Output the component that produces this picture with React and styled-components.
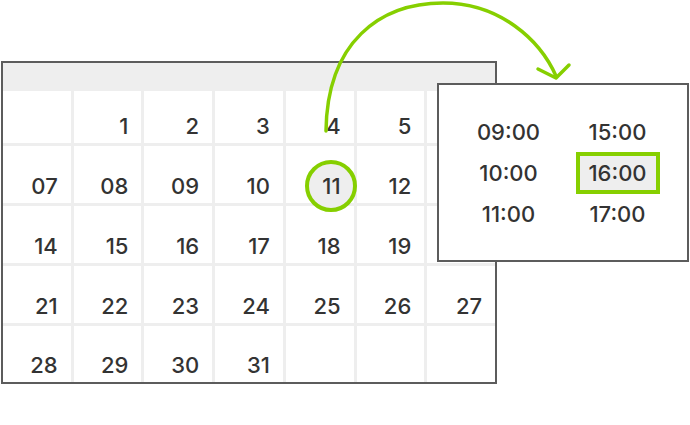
import React from "react";
import styled, { createGlobalStyle, css } from "styled-components";

const GREEN = "#86cf00";

const GlobalStyle = createGlobalStyle`
  body {
    margin: 0;
    background: #ffffff;
    font-family: Inter, "DejaVu Sans", sans-serif;
  }
`;

const Stage = styled.div`
  position: relative;
  width: 690px;
  height: 425px;
  overflow: hidden;
  padding: 61px 0 0 1px;
  box-sizing: border-box;
`;

const Calendar = styled.div`
  width: 496px;
  border: 2px solid #5c5c5c;
  box-sizing: border-box;
  background: #eeeeee;
`;

const CalendarHeader = styled.div`
  height: 28px;
  background: #eeeeee;
`;

const DayGrid = styled.div`
  display: grid;
  grid-template-columns: repeat(7, 1fr);
  grid-template-rows: 52px 57px 57px 57px 56px;
  gap: 3px;
  background: #eeeeee;
`;

const DayCell = styled.div`
  display: flex;
  align-items: flex-end;
  justify-content: flex-end;
  padding: 0 13px 6px 0;
  background: #ffffff;
`;

const DayNumber = styled.span`
  position: relative;
  z-index: 0;
  font-size: 22px;
  font-weight: 500;
  line-height: 22px;
  color: #333333;

  ${({ selected }) =>
    selected &&
    css`
      &::before {
        content: "";
        position: absolute;
        left: 50%;
        top: 50%;
        width: 52px;
        height: 52px;
        transform: translate(-50%, -50%);
        border: 4px solid ${GREEN};
        border-radius: 50%;
        background: #eeeeee;
        box-sizing: border-box;
        z-index: -1;
      }
    `}
`;

const TimePanel = styled.div`
  position: absolute;
  left: 437px;
  top: 83px;
  width: 252px;
  height: 179px;
  border: 2px solid #5c5c5c;
  box-sizing: border-box;
  background: #ffffff;
  display: grid;
  grid-template-columns: 84px 84px;
  grid-template-rows: repeat(3, 41px);
  grid-auto-flow: column;
  column-gap: 25px;
  justify-content: center;
  align-content: center;
`;

const TimeSlot = styled.div`
  display: flex;
  align-items: center;
  justify-content: center;
`;

const TimeLabel = styled.span`
  font-size: 22px;
  font-weight: 500;
  line-height: 26px;
  color: #333333;

  ${({ active }) =>
    active &&
    css`
      display: flex;
      align-items: center;
      justify-content: center;
      width: 84px;
      height: 42px;
      box-sizing: border-box;
      border: 4px solid ${GREEN};
      background: #eeeeee;
    `}
`;

const ArrowLayer = styled.svg`
  position: absolute;
  left: 0;
  top: 0;
  pointer-events: none;
`;

// last column of the first rows sits under the time panel
const weeks = [
  ["", "1", "2", "3", "4", "5", ""],
  ["07", "08", "09", "10", "11", "12", ""],
  ["14", "15", "16", "17", "18", "19", ""],
  ["21", "22", "23", "24", "25", "26", "27"],
  ["28", "29", "30", "31", "", "", ""],
];

const times = ["09:00", "10:00", "11:00", "15:00", "16:00", "17:00"];

const App = () => {
  return (
    <>
      <GlobalStyle />
      <Stage>
        <Calendar>
          <CalendarHeader />
          <DayGrid>
            {weeks.flat().map((day, i) => (
              <DayCell key={i}>
                <DayNumber selected={day === "11"}>{day}</DayNumber>
              </DayCell>
            ))}
          </DayGrid>
        </Calendar>

        <TimePanel>
          {times.map((t) => (
            <TimeSlot key={t}>
              <TimeLabel active={t === "16:00"}>{t}</TimeLabel>
            </TimeSlot>
          ))}
        </TimePanel>

        <ArrowLayer width="690" height="425" viewBox="0 0 690 425">
          <path
            d="M326 131 C 327 42 380 3 443 3 C 500 3 540 40 556 76"
            fill="none"
            stroke={GREEN}
            strokeWidth="3.5"
            strokeLinecap="round"
          />
          <path
            d="M538 69 L556 78 L569 65"
            fill="none"
            stroke={GREEN}
            strokeWidth="3.5"
            strokeLinecap="round"
            strokeLinejoin="round"
          />
        </ArrowLayer>
      </Stage>
    </>
  );
};

export default App;
